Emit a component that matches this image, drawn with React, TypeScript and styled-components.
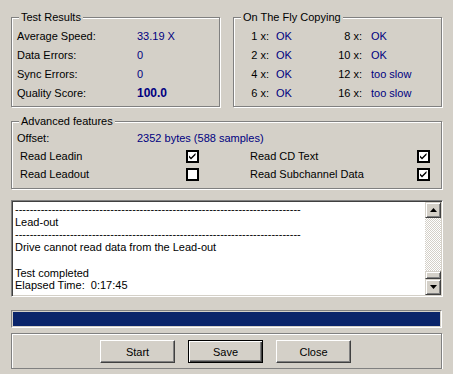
import React from "react";
import styled, { createGlobalStyle } from "styled-components";

const GlobalStyle = createGlobalStyle`
  html, body {
    margin: 0;
    padding: 0;
    background: #d4d0c8;
  }
  body {
    font-family: "Liberation Sans", Arial, sans-serif;
    font-size: 11px;
    color: #000;
  }
`;

const results = [
  { label: "Average Speed:", value: "33.19 X", bold: false },
  { label: "Data Errors:", value: "0", bold: false },
  { label: "Sync Errors:", value: "0", bold: false },
  { label: "Quality Score:", value: "100.0", bold: true },
];

const copying = [
  ["1 x:", "OK", "8 x:", "OK"],
  ["2 x:", "OK", "10 x:", "OK"],
  ["4 x:", "OK", "12 x:", "too slow"],
  ["6 x:", "OK", "16 x:", "too slow"],
];

const DASHES = "-".repeat(78);

const logLines = [
  DASHES,
  "Lead-out",
  DASHES,
  "Drive cannot read data from the Lead-out",
  "",
  "Test completed",
  "Elapsed Time:  0:17:45",
];

const CheckMark = () => (
  <svg width="9" height="9" viewBox="0 0 9 9">
    <path d="M1 3.5 L3 5.5 L7.5 1 L7.5 3 L3 7.5 L1 5.5 Z" fill="#000" />
  </svg>
);

const Arrow = ({ up }: { up?: boolean }) => (
  <svg width="7" height="4" viewBox="0 0 7 4">
    <path d={up ? "M3.5 0 L7 4 L0 4 Z" : "M0 0 L7 0 L3.5 4 Z"} fill="#000" />
  </svg>
);

const App = () => {
  return (
    <>
      <GlobalStyle />
      <Dialog>
        <TopRow>
          <GroupBox $height={90}>
            <GroupTitle>Test Results</GroupTitle>
            <ResultsGrid>
              {results.map((r) => (
                <React.Fragment key={r.label}>
                  <Label>{r.label}</Label>
                  <Value $bold={r.bold}>{r.value}</Value>
                </React.Fragment>
              ))}
            </ResultsGrid>
          </GroupBox>
          <GroupBox $height={90}>
            <GroupTitle>On The Fly Copying</GroupTitle>
            <CopyGrid>
              {copying.map((row) => (
                <React.Fragment key={row[0]}>
                  <SpeedLabel>{row[0]}</SpeedLabel>
                  <Value>{row[1]}</Value>
                  <SpeedLabel>{row[2]}</SpeedLabel>
                  <Value>{row[3]}</Value>
                </React.Fragment>
              ))}
            </CopyGrid>
          </GroupBox>
        </TopRow>

        <GroupBox $height={68} $mt={14}>
          <GroupTitle>Advanced features</GroupTitle>
          <OffsetRow>
            <Label>Offset:</Label>
            <Value>2352 bytes (588 samples)</Value>
          </OffsetRow>
          <FeatureGrid>
            <Label>Read Leadin</Label>
            <CheckBox>
              <CheckMark />
            </CheckBox>
            <span />
            <Label>Read CD Text</Label>
            <CheckBox>
              <CheckMark />
            </CheckBox>
            <Label>Read Leadout</Label>
            <CheckBox />
            <span />
            <Label>Read Subchannel Data</Label>
            <CheckBox>
              <CheckMark />
            </CheckBox>
          </FeatureGrid>
        </GroupBox>

        <LogBox>
          <LogText>
            {logLines.map((line, i) => (
              <LogLine key={i}>{line || "\u00a0"}</LogLine>
            ))}
          </LogText>
          <ScrollBar>
            <ScrollButton>
              <Arrow up />
            </ScrollButton>
            <ScrollTrack />
            <ScrollThumb />
            <ScrollButton>
              <Arrow />
            </ScrollButton>
          </ScrollBar>
        </LogBox>

        <Progress>
          <ProgressFill style={{ width: "100%" }} />
        </Progress>

        <ButtonBar>
          <PushButton>Start</PushButton>
          <PushButton $default>Save</PushButton>
          <PushButton>Close</PushButton>
        </ButtonBar>
      </Dialog>
    </>
  );
};

export default App;

const Dialog = styled.div`
  width: 431px;
  padding: 17px 11px 0;
  display: flex;
  flex-direction: column;
`;

const TopRow = styled.div`
  display: grid;
  grid-template-columns: 209px 209px;
  column-gap: 13px;
`;

const GroupBox = styled.div<{ $height: number; $mt?: number }>`
  position: relative;
  box-sizing: border-box;
  height: ${(p) => p.$height}px;
  margin-top: ${(p) => p.$mt ?? 0}px;
  border: 1px solid #808080;
  box-shadow: 1px 1px 0 #fff, inset 1px 1px 0 #fff;
`;

const GroupTitle = styled.span`
  position: absolute;
  top: -7px;
  left: 7px;
  padding: 0 2px;
  line-height: 13px;
  background: #d4d0c8;
  white-space: nowrap;
`;

const ResultsGrid = styled.div`
  display: grid;
  grid-template-columns: 120px auto;
  grid-auto-rows: 19px;
  align-items: center;
  padding: 8px 0 0 5px;
`;

const CopyGrid = styled.div`
  display: grid;
  grid-template-columns: 35px 64px 29px auto;
  grid-auto-rows: 19px;
  align-items: center;
  padding-top: 8px;

  & > :nth-child(4n + 1),
  & > :nth-child(4n + 3) {
    padding-right: 0;
  }
  & > :nth-child(4n + 2) {
    padding-left: 7px;
  }
  & > :nth-child(4n + 4) {
    padding-left: 9px;
  }
`;

const Label = styled.span`
  white-space: nowrap;
  color: #000;
`;

const SpeedLabel = styled.span`
  text-align: right;
  white-space: nowrap;
`;

const Value = styled.span<{ $bold?: boolean }>`
  color: #000080;
  white-space: nowrap;
  font-weight: ${(p) => (p.$bold ? 700 : 400)};
  font-size: ${(p) => (p.$bold ? "12px" : "11px")};
`;

const OffsetRow = styled.div`
  display: grid;
  grid-template-columns: 120px auto;
  height: 19px;
  align-items: center;
  padding: 6px 0 0 5px;
`;

const FeatureGrid = styled.div`
  display: grid;
  grid-template-columns: 166px 13px 51px 167px 13px;
  grid-auto-rows: 18px;
  align-items: center;
  padding-left: 8px;
`;

const CheckBox = styled.span`
  box-sizing: border-box;
  width: 13px;
  height: 13px;
  border: 2px solid #000;
  background: #fff;
  display: flex;
  align-items: center;
  justify-content: center;
`;

const LogBox = styled.div`
  box-sizing: border-box;
  margin-top: 11px;
  width: 432px;
  height: 97px;
  display: flex;
  padding: 1px;
  border: 1px solid;
  border-color: #808080 #fff #fff #808080;
  box-shadow: inset 1px 1px 0 #404040, inset -1px -1px 0 #d4d0c8;
`;

const LogText = styled.div`
  flex: 1;
  background: #fff;
  padding: 1px 0 0 2px;
  overflow: hidden;
`;

const LogLine = styled.div`
  line-height: 12.7px;
  white-space: pre;
`;

const ScrollBar = styled.div`
  width: 16px;
  display: flex;
  flex-direction: column;
`;

const raised = `
  box-sizing: border-box;
  background: #d4d0c8;
  border: 1px solid;
  border-color: #d4d0c8 #404040 #404040 #d4d0c8;
  box-shadow: inset 1px 1px 0 #fff, inset -1px -1px 0 #808080;
`;

const ScrollButton = styled.div`
  ${raised}
  width: 16px;
  height: 16px;
  display: flex;
  align-items: center;
  justify-content: center;
`;

const ScrollTrack = styled.div`
  flex: 1;
  background-image: repeating-conic-gradient(#d4d0c8 0 25%, #fff 0 50%);
  background-size: 2px 2px;
`;

const ScrollThumb = styled.div`
  ${raised}
  height: 8px;
`;

const Progress = styled.div`
  box-sizing: border-box;
  margin-top: 13px;
  height: 18px;
  padding: 1px;
  border: 1px solid;
  border-color: #808080 #fff #fff #808080;
`;

const ProgressFill = styled.div`
  height: 100%;
  background: #0a246a;
`;

const ButtonBar = styled.div`
  box-sizing: border-box;
  margin-top: 5px;
  height: 36px;
  border: 1px solid #808080;
  box-shadow: 1px 1px 0 #fff, inset 1px 1px 0 #fff;
  display: flex;
  justify-content: center;
  align-items: flex-start;
  gap: 13px;
  padding: 6px 2px 0 0;
`;

const PushButton = styled.button<{ $default?: boolean }>`
  box-sizing: border-box;
  width: 75px;
  height: 23px;
  padding: 0;
  font-family: "Liberation Sans", Arial, sans-serif;
  font-size: 11px;
  color: #000;
  background: #d4d0c8;
  border: 1px solid;
  border-color: ${(p) =>
    p.$default ? "#000" : "#fff #404040 #404040 #fff"};
  box-shadow: ${(p) =>
    p.$default
      ? "inset 1px 1px 0 #fff, inset -1px -1px 0 #404040, inset -2px -2px 0 #808080"
      : "inset -1px -1px 0 #808080"};
  cursor: pointer;
`;
